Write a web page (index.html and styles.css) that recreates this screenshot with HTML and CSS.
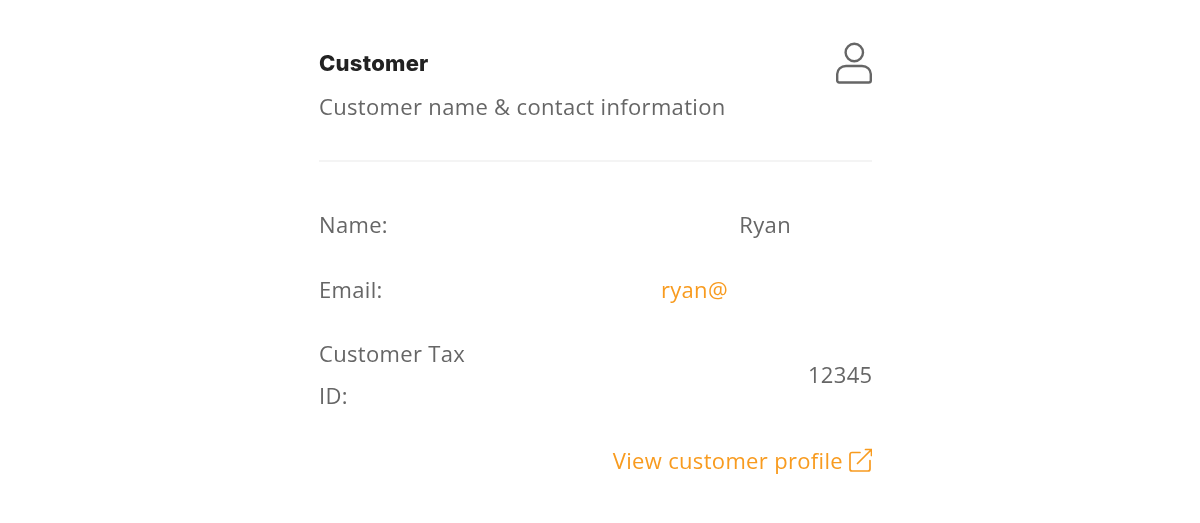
FILE: index.html
```html
<!DOCTYPE html>
<html lang="en">
<head>
<meta charset="utf-8">
<title>Customer</title>
<link rel="stylesheet" href="styles.css">
</head>
<body>
<section class="card">
  <header class="head">
    <div>
      <h2 class="title">Customer</h2>
      <p class="sub">Customer name &amp; contact information</p>
    </div>
    <svg class="user" width="36" height="42" viewBox="0 0 36 42" fill="none" stroke="#666" stroke-width="2.4"><circle cx="18.300" cy="10.500" r="8.700"/><path d="M10 24h16c5 0 8.800 3.400 8.800 8v6.500c0 1.200-.8 2-2 2H3.200c-1.200 0-2-.8-2-2V32c0-4.600 3.800-8 8.800-8z"/></svg>
  </header>
  <dl class="rows">
    <div class="row"><dt class="label">Name:</dt><dd class="value value-name">Ryan</dd></div>
    <div class="row row-tight"><dt class="label">Email:</dt><dd class="value value-email"><a class="link" href="#">ryan@</a></dd></div>
    <div class="row"><dt class="label label-wrap">Customer Tax ID:</dt><dd class="value">12345</dd></div>
  </dl>
  <a class="link profile" href="#">View customer profile
    <svg width="23" height="24" viewBox="0 0 23 24" fill="none" stroke="#f89b1f" stroke-width="1.700" stroke-linecap="round" stroke-linejoin="round"><path d="M11 4.500H3a2 2 0 0 0-2 2V21a2 2 0 0 0 2 2h16a2 2 0 0 0 2-2v-8.500"/><path d="M8.500 15.500 22 2M16.500 1.500h6V7.500"/></svg>
  </a>
</section>
</body>
</html>
```
FILE: styles.css
```css
* { box-sizing: border-box; }
html, body { margin: 0; background: #fff; }
body { font-family: "Open Sans", sans-serif; color: #666; font-size: 22px; letter-spacing: 0.33px; }
.card { width: 553px; margin: 0 auto 0 319px; padding-top: 40px; will-change: transform; }
.head { display: flex; justify-content: space-between; align-items: flex-start; height: 122px; border-bottom: 2px solid #f4f4f4; }
.title { margin: 0; font-family: "Inter", sans-serif; font-weight: 800; font-size: 22px; line-height: 46px; color: #222; letter-spacing: 0.25px; }
.sub { margin: -1px 0 0; line-height: 42px; font-size: 22px; }
.user { margin-top: 2px; }
.rows { margin: 41px 0 0; }
.row { display: flex; justify-content: space-between; align-items: center; padding-bottom: 23px; }
.row-tight { padding-bottom: 22px; }
.label { line-height: 42px; }
.label-wrap { width: 160px; }
.value { margin: 0 -0.5px 0 0; line-height: 42px; }
.value-name { padding-right: 81.5px; }
.value-email { padding-right: 144.5px; }
.link { color: #f89b1f; text-decoration: none; }
.profile { display: flex; justify-content: flex-end; align-items: center; gap: 6px; line-height: 42px; }
```
